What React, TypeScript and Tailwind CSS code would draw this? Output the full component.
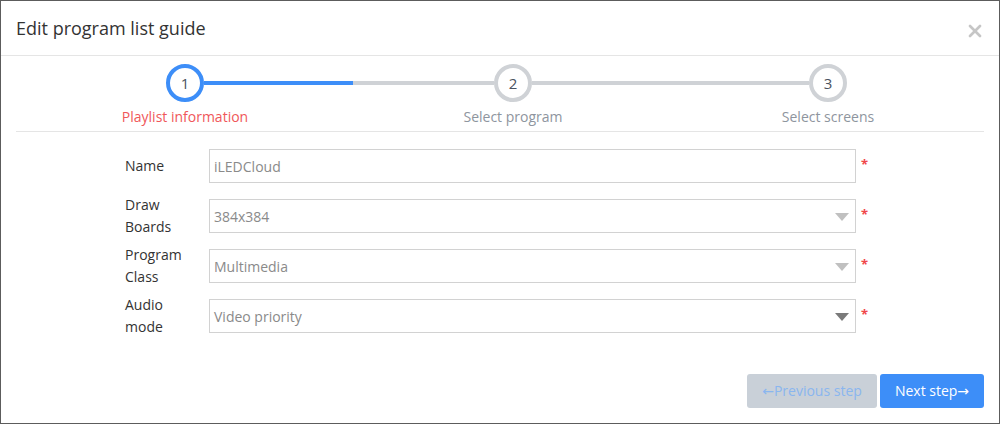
import { X } from 'lucide-react'

const rows = [
    { label: ['Name'], value: 'iLEDCloud', select: false, arrow: '' },
    { label: ['Draw', 'Boards'], value: '384x384', select: true, arrow: 'border-t-[#c0c0c0]' },
    { label: ['Program', 'Class'], value: 'Multimedia', select: true, arrow: 'border-t-[#c0c0c0]' },
    { label: ['Audio', 'mode'], value: 'Video priority', select: true, arrow: 'border-t-[#7a7a7a]' },
]

function Circle({ n, active }: { n: number; active?: boolean }) {
    return (
        <div
            className={`flex h-[38px] w-[38px] shrink-0 items-center justify-center rounded-full border-[4px] bg-white text-[15px] text-[#4a5360] ${
                active ? 'border-[#3d8ef8]' : 'border-[#cfd2d6]'
            }`}
        >
            {n}
        </div>
    )
}

const arrowFont = { fontFamily: '"DejaVu Sans", sans-serif' }

export default function App() {
    return (
        <div
            className="flex h-[424px] w-[1000px] flex-col border border-[#5c5c5c] bg-white"
            style={{ fontFamily: '"Open Sans", "Liberation Sans", sans-serif' }}
        >
            {/* header */}
            <div className="flex h-[55px] shrink-0 items-center justify-between border-b border-[#e5e5e5] pl-[15px] pr-[14px]">
                <h2 className="text-[18px] text-[#333]">Edit program list guide</h2>
                <X className="mt-[5px] h-[20px] w-[20px] text-[#c6c6c6]" strokeWidth={3.2} />
            </div>

            {/* steps */}
            <div className="mx-[15px] border-b border-[#e5e5e5] pb-[4px]">
                <div className="flex items-center pl-[150px] pt-[8px]">
                    <Circle n={1} active />
                    <div className="flex h-[4px] w-[290px]">
                        <div className="h-full w-[149px] bg-[#3d8ef8]" />
                        <div className="h-full flex-1 bg-[#cfd2d6]" />
                    </div>
                    <Circle n={2} />
                    <div className="h-[4px] w-[277px] bg-[#cfd2d6]" />
                    <Circle n={3} />
                </div>
                <div className="mt-[5px] flex text-[14px] leading-[20px]">
                    <div className="ml-[69px] w-[200px] text-center text-[#f0575a]">Playlist information</div>
                    <div className="ml-[128px] w-[200px] text-center text-[#8e959e]">Select program</div>
                    <div className="ml-[115px] w-[200px] text-center text-[#8e959e]">Select screens</div>
                </div>
            </div>

            {/* form */}
            <div className="flex flex-col gap-[16px] pt-[17px]">
                {rows.map((r) => (
                    <div key={r.value} className="flex h-[34px] items-center">
                        <div className="w-[208px] pl-[124px] text-[14px] leading-[22px] text-[#333]">
                            {r.label.map((l) => (
                                <div key={l}>{l}</div>
                            ))}
                        </div>
                        <div className="flex h-[34px] w-[647px] items-center justify-between border border-[#d2d2d2] pl-[4px] pr-[6px]">
                            <span className="text-[14px] text-[#8a8a8a]">{r.value}</span>
                            {r.select && (
                                <span
                                    className={`mt-[1px] h-0 w-0 border-x-[7px] border-t-[8px] border-x-transparent ${r.arrow}`}
                                />
                            )}
                        </div>
                        <span className="mb-[3px] ml-[5px] text-[13px] font-bold text-[#f0474a]">*</span>
                    </div>
                ))}
            </div>

            {/* footer */}
            <div className="mt-auto flex justify-end gap-[3px] pb-[15px] pr-[15px]">
                <button className="h-[34px] w-[130px] rounded-[3px] bg-[#c9d0d8] text-[14px] text-[#8ab6ef]">
                    <span style={arrowFont}>←</span>Previous step
                </button>
                <button className="h-[34px] w-[104px] rounded-[3px] bg-[#3d8ef8] text-[14px] text-white">
                    Next step<span style={arrowFont}>→</span>
                </button>
            </div>
        </div>
    )
}
